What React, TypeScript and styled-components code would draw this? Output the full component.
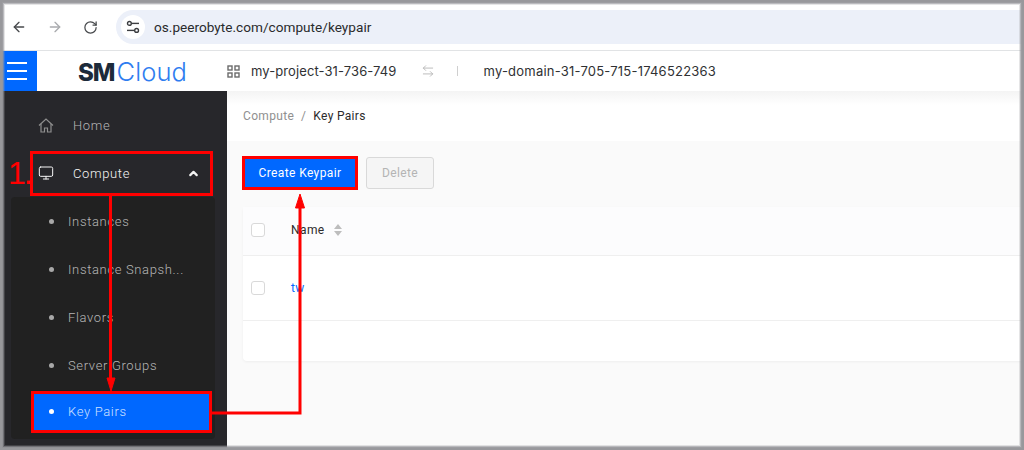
import React from "react";
import styled, { createGlobalStyle } from "styled-components";
import { ArrowLeft, ArrowRight, RotateCw, Monitor, ChevronUp, ArrowLeftRight } from "lucide-react";

const Global = createGlobalStyle`
  html, body { margin: 0; padding: 0; background: #fff; }
  body { font-family: "Roboto", Arial, sans-serif; width: 1024px; height: 450px; overflow: hidden; }
`;

const Page = styled.div`
  position: relative;
  width: 1024px;
  height: 450px;
  overflow: hidden;
  display: flex;
  flex-direction: column;
  background: #fff;
`;

const Frame = styled.div`
  position: absolute;
  inset: 0;
  pointer-events: none;
  z-index: 5;
  box-shadow:
    inset 0 0 0 2px #98989c,
    inset 0 0 0 3px rgba(152, 152, 156, 0.85),
    inset 0 0 0 4px rgba(152, 152, 156, 0.55),
    inset 0 0 0 5px rgba(152, 152, 156, 0.25);
`;

const BrowserBar = styled.div`
  height: 51px;
  flex: none;
  border-bottom: 1px solid #e1e3e5;
  display: flex;
  align-items: center;
  padding: 4px 0 0 11px;
  box-sizing: border-box;
`;

const NavBtn = styled.span<{ $muted?: boolean }>`
  width: 36px;
  display: flex;
  color: ${(p) => (p.$muted ? "#a9abae" : "#47494c")};
`;

const Address = styled.div`
  margin-left: -3px;
  flex: 1;
  height: 34px;
  border-radius: 17px 0 0 17px;
  background: #ecf0f9;
  display: flex;
  align-items: center;
  gap: 9px;
  padding-left: 5px;
  font: 400 13.6px "Roboto", sans-serif;
  letter-spacing: 0.02px;
  color: #2a2b2d;
`;

const SiteIcon = styled.span`
  width: 24px;
  height: 24px;
  border-radius: 50%;
  background: #fff;
  display: flex;
  align-items: center;
  justify-content: center;
  color: #3c3e41;
`;

const Header = styled.header`
  height: 40px;
  flex: none;
  display: flex;
  align-items: center;
  position: relative;
  z-index: 1;
  background: #fff;
`;

const Burger = styled.div`
  width: 37px;
  height: 40px;
  background: #0068ff;
  display: flex;
  flex-direction: column;
  justify-content: center;
  align-items: flex-end;
  gap: 6px;
  padding-right: 10px;
  box-sizing: border-box;
`;

const BurgerLine = styled.span`
  width: 20px;
  height: 2px;
  background: #fff;
`;

const Logo = styled.div`
  margin-left: 41px;
  width: 149px;
  font: 300 25.5px "Inter", sans-serif;
  color: #2f7df0;
  letter-spacing: 0.1px;
  display: flex;
  align-items: baseline;
  gap: 2px;
  b { font-weight: 800; color: #1d2b3a; font-size: 24px; letter-spacing: -1px; }
`;

const HeaderText = styled.span<{ $spacing: number }>`
  font: 400 13px "Inter", sans-serif;
  letter-spacing: ${(p) => p.$spacing}px;
  color: #303133;
`;

const ProjectIcon = styled.svg`
  margin-right: 11px;
`;

const Switch = styled.span`
  display: flex;
  margin-left: 25px;
  color: #b5b5b5;
`;

const Sep = styled.span`
  width: 1px;
  height: 10px;
  background: #cfcfcf;
  margin: 0 25px 0 22px;
`;

const Body = styled.div`
  flex: 1;
  display: flex;
  min-height: 0;
`;

const Sidebar = styled.aside`
  width: 227px;
  flex: none;
  background: #27272b;
  padding: 10px 12px 0 11px;
  box-sizing: border-box;
  font: 300 13px "Roboto", sans-serif;
  letter-spacing: 0.65px;
`;

const TopItem = styled.div<{ $active?: boolean }>`
  height: 48px;
  display: flex;
  align-items: center;
  padding-left: 27px;
  color: ${(p) => (p.$active ? "#f6f6f6" : "#b6b6b6")};
  > svg { margin-right: 19px; }
`;

const Chevron = styled.span`
  margin-left: auto;
  margin-right: 15px;
  display: flex;
  color: #f2f2f2;
`;

const SubMenu = styled.div`
  background: #212121;
  border-radius: 4px;
  height: 242px;
`;

const SubItem = styled.div<{ $active?: boolean }>`
  height: 48px;
  display: flex;
  align-items: center;
  padding-left: 38px;
  color: ${(p) => (p.$active ? "#cfe0ff" : "#b6b6b6")};
  &:last-child { height: 40px; margin: 2px 4px 0 21px; padding: 0 0 0 17px; box-sizing: border-box; background: #0068ff; }
  &::before {
    content: "";
    width: 5px;
    height: 5px;
    border-radius: 50%;
    margin-right: 14px;
    background: ${(p) => (p.$active ? "#fff" : "#a8a8a8")};
  }
`;

const Main = styled.main`
  flex: 1;
  background: #fafafa;
  display: flex;
  flex-direction: column;
`;

const Breadcrumb = styled.div`
  height: 50px;
  flex: none;
  background: linear-gradient(#f4f4f4, #fff 14px);
  display: flex;
  align-items: center;
  padding: 0 0 1px 16px;
  box-sizing: border-box;
  font: 400 12px "Roboto", sans-serif;
  letter-spacing: 0.32px;
  color: #909090;
  gap: 7px;
  b { font-weight: 400; color: #2b2b2b; }
`;

const Content = styled.div`
  padding: 16px 0 0 16px;
`;

const Toolbar = styled.div`
  display: flex;
  gap: 9px;
  height: 32px;
  margin-bottom: 18px;
`;

const Button = styled.button<{ $primary?: boolean }>`
  height: 32px;
  padding: 0;
  width: ${(p) => (p.$primary ? "114px" : "68px")};
  border-radius: 3px;
  border: 1px solid ${(p) => (p.$primary ? "#0068ff" : "#d9d9d9")};
  background: ${(p) => (p.$primary ? "#0068ff" : "#f5f5f5")};
  color: ${(p) => (p.$primary ? "#fff" : "#b4b4b4")};
  font: 400 12px "Roboto", sans-serif;
  letter-spacing: 0.38px;
`;

const Card = styled.div`
  background: #fff;
  border-radius: 4px 0 0 4px;
  height: 154px;
  box-shadow: 0 1px 3px rgba(0, 0, 0, 0.05);
`;

const Row = styled.div<{ $head?: boolean; $h: number }>`
  height: ${(p) => p.$h}px;
  box-sizing: border-box;
  display: flex;
  align-items: center;
  padding: 0 0 ${(p) => (p.$head ? 3 : 1)}px 8px;
  font: 400 12px "Roboto", sans-serif;
  letter-spacing: 0.4px;
  color: #2b2b2b;
  background: ${(p) => (p.$head ? "#fcfcfd" : "#fff")};
  border-bottom: 1px solid #efefef;
`;

const Check = styled.span`
  width: 14px;
  height: 14px;
  box-sizing: border-box;
  border: 1px solid #d9d9d9;
  border-radius: 3px;
  background: #fff;
  margin-right: 26px;
  flex: none;
`;

const NameLink = styled.span`
  color: #0068ff;
`;

const Sort = styled.svg`
  margin-left: 8px;
`;

const Box = styled.div<{ $x: number; $y: number; $w: number; $h: number }>`
  position: absolute;
  left: ${(p) => p.$x}px;
  top: ${(p) => p.$y}px;
  width: ${(p) => p.$w}px;
  height: ${(p) => p.$h}px;
  box-sizing: border-box;
  border: 3px solid #f00;
  pointer-events: none;
  z-index: 3;
`;

const Arrows = styled.svg`
  position: absolute;
  inset: 0;
  pointer-events: none;
  z-index: 3;
`;

const StepLabel = styled.span`
  position: absolute;
  left: 8px;
  top: 155px;
  font: 400 32px "Liberation Sans", sans-serif;
  letter-spacing: -2px;
  color: #f00;
  z-index: 3;
`;

export default function App() {
  return (
    <Page>
      <Global />
      <BrowserBar>
        <NavBtn><ArrowLeft size={16} strokeWidth={2} /></NavBtn>
        <NavBtn $muted><ArrowRight size={16} strokeWidth={2} /></NavBtn>
        <NavBtn><RotateCw size={15} strokeWidth={2} /></NavBtn>
        <Address>
          <SiteIcon>
            <svg width="14" height="14" viewBox="0 0 14 14" fill="none" stroke="currentColor" strokeWidth="1.4">
              <circle cx="3.4" cy="3.4" r="1.9" />
              <path d="M5.5 3.4H13" />
              <circle cx="10.6" cy="10.4" r="1.9" />
              <path d="M1 10.4h7.5" />
            </svg>
          </SiteIcon>
          os.peerobyte.com/compute/keypair
        </Address>
      </BrowserBar>
      <Header>
        <Burger><BurgerLine /><BurgerLine /><BurgerLine /></Burger>
        <Logo><b>SM</b>Cloud</Logo>
        <ProjectIcon width="13" height="13" viewBox="0 0 13 13" fill="none" stroke="#6b6b6b" strokeWidth="1.4">
          <rect x="1" y="1" width="4" height="4" />
          <rect x="8" y="1" width="4" height="4" />
          <rect x="1" y="8" width="4" height="4" />
          <rect x="8" y="8" width="4" height="4" />
        </ProjectIcon>
        <HeaderText $spacing={0.1}>my-project-31-736-749</HeaderText>
        <Switch><ArrowLeftRight size={14} strokeWidth={1.5} /></Switch>
        <Sep />
        <HeaderText $spacing={0.22}>my-domain-31-705-715-1746522363</HeaderText>
      </Header>
      <Body>
        <Sidebar>
          <TopItem>
            <svg width="16" height="15" viewBox="0 0 16 15" fill="none" stroke="#8f8f8f" strokeWidth="1.2">
              <path d="M1 7.500L8 1l7 6.500" />
              <path d="M3 6v8h3.500v-4h3v4H13V6" />
            </svg>
            Home
          </TopItem>
          <TopItem $active>
            <Monitor size={16} strokeWidth={1.5} />Compute
            <Chevron><ChevronUp size={13} strokeWidth={4} /></Chevron>
          </TopItem>
          <SubMenu>
            <SubItem>Instances</SubItem>
            <SubItem>Instance Snapsh...</SubItem>
            <SubItem>Flavors</SubItem>
            <SubItem>Server Groups</SubItem>
            <SubItem $active>Key Pairs</SubItem>
          </SubMenu>
        </Sidebar>
        <Main>
          <Breadcrumb>Compute<span>/</span><b>Key Pairs</b></Breadcrumb>
          <Content>
            <Toolbar>
              <Button $primary>Create Keypair</Button>
              <Button>Delete</Button>
            </Toolbar>
            <Card>
              <Row $head $h={49}>
                <Check />Name
                <Sort width="10" height="14" viewBox="0 0 10 14">
                  <path d="M5 1l4 5H1z M5 13L1 8h8z" fill="#bdbdbd" />
                </Sort>
              </Row>
              <Row $h={65}><Check /><NameLink>tw</NameLink></Row>
            </Card>
          </Content>
        </Main>
      </Body>
      <Box $x={30} $y={151} $w={183} $h={45} />
      <Box $x={31} $y={391} $w={181} $h={42} />
      <Box $x={242} $y={156} $w={116} $h={34} />
      <StepLabel>1.</StepLabel>
      <Arrows width="1024" height="450" viewBox="0 0 1024 450">
        <path d="M110.500 196V381" stroke="#f00" strokeWidth="3" fill="none" />
        <path d="M107 378h8l-4 13z" fill="#f00" stroke="#f00" />
        <path d="M212 413H300V204" stroke="#f00" strokeWidth="3" fill="none" />
        <path d="M295.500 208L300 194L304.500 208z" fill="#f00" stroke="#f00" />
      </Arrows>
      <Frame />
    </Page>
  );
}
